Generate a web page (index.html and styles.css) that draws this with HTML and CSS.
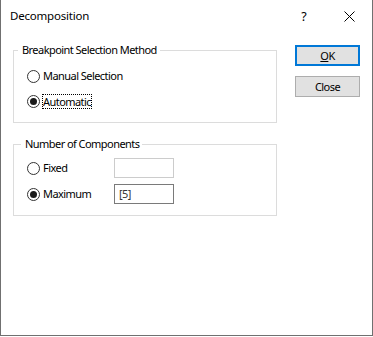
FILE: index.html
```html
<!DOCTYPE html>
<html>
<head>
<meta charset="utf-8">
<link rel="stylesheet" href="styles.css">
</head>
<body>
<div class="window">
  <div class="titlebar">
    <span class="title">Decomposition</span>
    <div class="caption">
      <span class="cap-btn help">?</span>
      <span class="cap-btn close">
        <svg width="11" height="11" viewBox="0 0 11 11"><path d="M0.5 0.5 L10.5 10.5 M10.5 0.5 L0.5 10.5" stroke="#000" stroke-width="1" fill="none"/></svg>
      </span>
    </div>
  </div>
  <div class="content">
    <div class="groups">
      <fieldset class="group g1">
        <legend>Breakpoint Selection Method</legend>
        <div class="rows">
          <div class="row"><span class="radio"></span><span class="label">Manual Selection</span></div>
          <div class="row"><span class="radio checked"></span><span class="label focus">Automatic</span></div>
        </div>
      </fieldset>
      <fieldset class="group g2">
        <legend>Number of Components</legend>
        <div class="rows rows2">
          <div class="row"><span class="opt"><span class="radio"></span><span class="label">Fixed</span></span><span class="input light"></span></div>
          <div class="row"><span class="opt"><span class="radio checked"></span><span class="label">Maximum</span></span><span class="input dark">[5]</span></div>
        </div>
      </fieldset>
    </div>
    <div class="buttons">
      <div class="btn default"><span class="ul">O</span>K</div>
      <div class="btn">Close</div>
    </div>
  </div>
</div>
</body>
</html>
```

FILE: styles.css
```css
html, body {
  margin: 0;
  padding: 0;
  background: #fff;
}
body {
  font-family: "Noto Sans", "Open Sans", sans-serif;
  font-size: 11px;
  letter-spacing: -0.55px;
  color: #000;
}
.window {
  width: 373px;
  height: 336px;
  box-sizing: border-box;
  border: 1px solid #707070;
  border-top: none;
  background: #fff;
}
.titlebar {
  display: flex;
  align-items: center;
  height: 32px;
  padding-left: 9px;
}
.title {
  font-size: 11.5px;
  letter-spacing: -0.2px;
  line-height: 16px;
}
.caption {
  margin-left: auto;
  display: flex;
  height: 32px;
}
.cap-btn {
  width: 46px;
  display: flex;
  align-items: center;
  justify-content: center;
}
.help {
  font-size: 12.5px;
  letter-spacing: 0;
  padding-left: 2px;
  box-sizing: border-box;
}
.close svg {
  display: block;
}
.content {
  display: flex;
  padding-left: 12px;
  padding-top: 10px;
}
.groups {
  width: 264px;
  display: flex;
  flex-direction: column;
  gap: 13px;
}
.group {
  margin: 0;
  border: 1px solid #dcdcdc;
  padding: 0;
  min-width: 0;
}
.group legend {
  line-height: 16px;
  padding: 0 3px 0 4px;
  margin-left: 4px;
}
.g2 legend {
  margin-left: 7px;
}
.rows {
  display: flex;
  flex-direction: column;
  gap: 5px;
  padding: 8px 0 11px 13px;
}
.rows2 {
  gap: 6px;
  padding-top: 6px;
}
.row {
  display: flex;
  align-items: center;
  height: 20px;
}
.opt {
  display: flex;
  align-items: center;
  width: 87px;
}
.radio {
  width: 13px;
  height: 13px;
  box-sizing: border-box;
  border: 1px solid #333;
  border-radius: 50%;
  background: #fff;
  display: flex;
  align-items: center;
  justify-content: center;
  flex: none;
}
.radio.checked::after {
  content: "";
  width: 7px;
  height: 7px;
  border-radius: 50%;
  background: #1a1a1a;
}
.label {
  margin-left: 3px;
  line-height: 16px;
}
.label.focus {
  margin-left: 2px;
  padding: 0 1px;
  outline: 1px dotted #000;
  outline-offset: -1px;
  line-height: 15px;
}
.input {
  width: 60px;
  height: 20px;
  box-sizing: border-box;
  border: 1px solid #ccc;
  padding-left: 4px;
  line-height: 18px;
  color: #333;
}
.input.dark {
  border-color: #7a7a7a;
}
.buttons {
  margin-left: 18px;
  margin-top: 3px;
  display: flex;
  flex-direction: column;
  gap: 10px;
}
.btn {
  width: 65px;
  height: 21px;
  box-sizing: border-box;
  border: 1px solid #adadad;
  background: #e1e1e1;
  display: flex;
  align-items: center;
  justify-content: center;
}
.btn.default {
  border: 2px solid #0078d7;
}
.ul {
  text-decoration: underline;
}
```
